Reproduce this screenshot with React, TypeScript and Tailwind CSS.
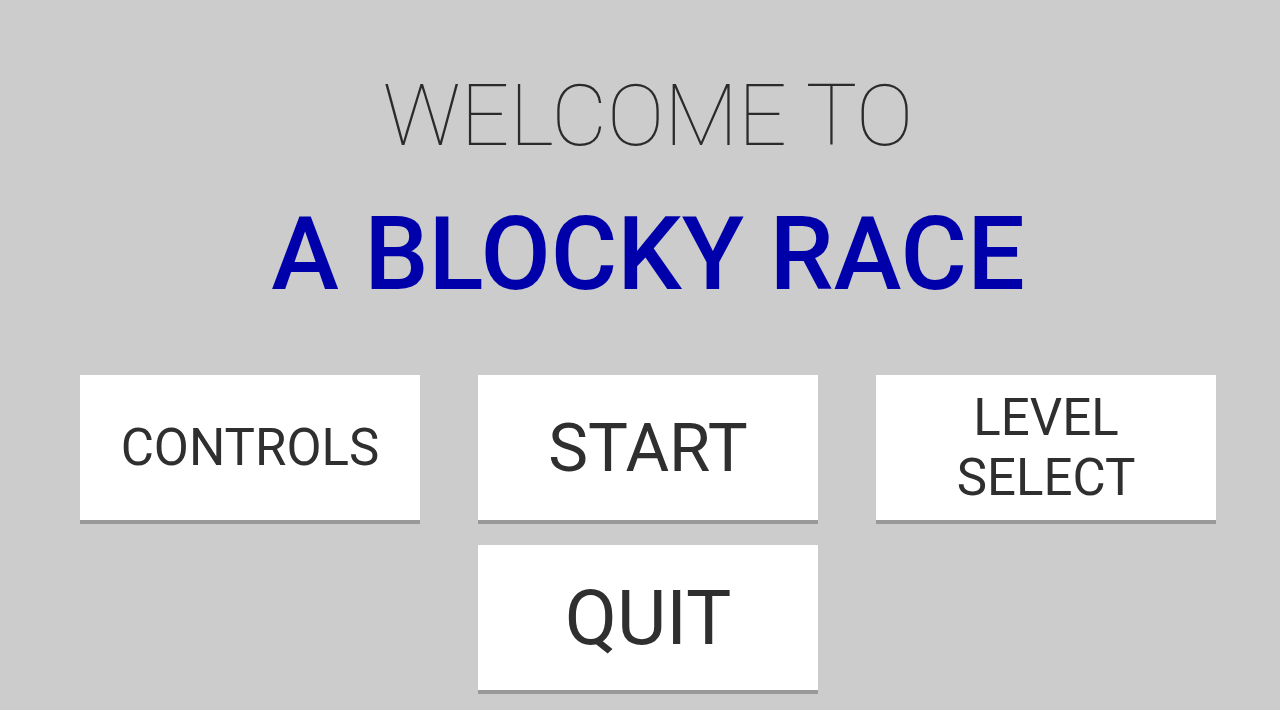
const button =
  "flex h-[149px] items-center justify-center border-b-4 border-[#999999] bg-white px-5 text-[#2f2f2f]";

export default function App() {
  return (
    <main className="min-h-screen bg-[#cccccc] pt-[60px] pr-16 pb-4 pl-20 font-['Roboto',sans-serif] text-[#2b2b2b]">
      <h1 className="text-center">
        <span className="block text-[86px] leading-[112px] font-thin">WELCOME TO</span>
        <span className="mt-6 block text-[102px] leading-[116px] font-medium text-[#0000aa]">A BLOCKY RACE</span>
      </h1>
      <nav aria-label="Main menu" className="mt-[63px] grid grid-cols-3 gap-x-[58px] gap-y-[21px]">
        <button type="button" className={`${button} text-[51px] leading-[60px]`}>CONTROLS</button>
        <button type="button" className={`${button} text-[67px] leading-[76px]`}>START</button>
        <button type="button" className={`${button} text-[51px] leading-[60px]`}>
          <span>LEVEL<br />SELECT</span>
        </button>
        <button type="button" className={`${button} col-start-2 text-[76px] leading-[88px]`}>QUIT</button>
      </nav>
    </main>
  );
}
